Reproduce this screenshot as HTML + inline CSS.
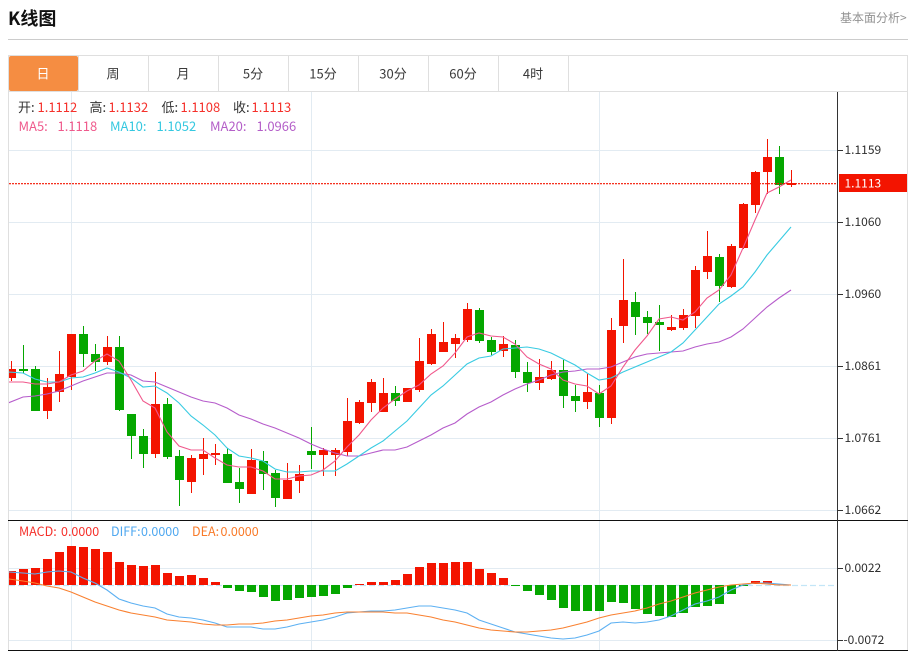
<!DOCTYPE html>
<html><head><meta charset="utf-8"><title>K线图</title>
<style>
html,body{margin:0;padding:0;background:#fff;width:915px;height:651px;overflow:hidden}
svg{display:block;font-family:"Noto Sans CJK SC","Liberation Sans",sans-serif}
</style></head><body>
<svg width="915" height="651" viewBox="0 0 915 651" xmlns="http://www.w3.org/2000/svg">
<defs><clipPath id="c"><rect x="9" y="92" width="828" height="558"/></clipPath></defs>
<text x="8" y="25" font-size="18" font-weight="700" fill="#111">K线图</text>
<text x="840" y="22" font-size="12" fill="#929292">基本面分析&gt;</text>
<rect x="8" y="39" width="900" height="1" fill="#ccc"/>
<g fill="#dfdfdf">
<rect x="8" y="55" width="900" height="1"/><rect x="8" y="91" width="900" height="1"/>
<rect x="8" y="55" width="1" height="596"/><rect x="907" y="55" width="1" height="596"/>
<rect x="78" y="56" width="1" height="35"/><rect x="148" y="56" width="1" height="35"/><rect x="218" y="56" width="1" height="35"/><rect x="288" y="56" width="1" height="35"/><rect x="358" y="56" width="1" height="35"/><rect x="428" y="56" width="1" height="35"/><rect x="498" y="56" width="1" height="35"/><rect x="568" y="56" width="1" height="35"/>
</g>
<rect x="9" y="56" width="69" height="35" rx="2" fill="#f58d42"/>
<g font-size="13" fill="#3a3a3a" text-anchor="middle">
<text x="43" y="78.5" fill="#fff">日</text><text x="113" y="78.5">周</text><text x="183" y="78.5">月</text><text x="253" y="78.5">5分</text><text x="323" y="78.5">15分</text><text x="393" y="78.5">30分</text><text x="463" y="78.5">60分</text><text x="533" y="78.5">4时</text>
</g>
<g fill="#e2ebf2">
<rect x="9" y="150" width="828" height="1"/><rect x="9" y="222" width="828" height="1"/><rect x="9" y="294" width="828" height="1"/><rect x="9" y="366" width="828" height="1"/><rect x="9" y="438" width="828" height="1"/><rect x="9" y="510" width="828" height="1"/><rect x="9" y="568" width="828" height="1"/><rect x="9" y="640" width="828" height="1"/>
<rect x="71" y="92" width="1" height="558"/><rect x="311" y="92" width="1" height="558"/><rect x="599" y="92" width="1" height="558"/>
</g>
<g clip-path="url(#c)" fill="none">
<path stroke="#f31400" stroke-width="1" d="M11.5 361V381M47.5 378V419M59.5 351V402M71.5 334V390M107.5 336V365M155.5 372V458M191.5 455V493M203.5 438V475M215.5 444V465M251.5 449V494M287.5 463V499M299.5 465V493M323.5 448V476M335.5 448V476M347.5 398V456M359.5 400V424M371.5 379V412M383.5 378V412M407.5 388V402M419.5 338V392M431.5 329V365M443.5 322V352M455.5 334V358M467.5 303V342M503.5 336V357M539.5 359V390M551.5 361V380M587.5 374V409M611.5 318V424M623.5 259V343M671.5 315V331M683.5 309V330M695.5 266V328M707.5 231V279M731.5 244V288M743.5 203V249M755.5 171V213M767.5 139V194M791.5 170V187"/>
<path stroke="#f31400" stroke-width="9" d="M11.5 369V378M47.5 387V411M59.5 374V392M71.5 334V377M107.5 347V362M155.5 404V454M191.5 458V482M203.5 454V459M215.5 453V455M251.5 460V494M287.5 480V499M299.5 474V481M323.5 450V455M335.5 450V455M347.5 421V452M359.5 402V423M371.5 382V403M383.5 393V412M407.5 388V402M419.5 361V390M431.5 334V364M443.5 342V352M455.5 338V344M467.5 309V340M503.5 344V351M539.5 377V383M551.5 370V379M587.5 392V402M611.5 330V418M623.5 300V326M671.5 327V330M683.5 315V328M695.5 270V316M707.5 256V272M731.5 246V287M743.5 204V248M755.5 172V205M767.5 157V172M791.5 183V185"/>
<path stroke="#05a700" stroke-width="1" d="M23.5 345V373M35.5 366V411M83.5 326V367M95.5 344V371M119.5 336V411M131.5 414V459M143.5 429V468M167.5 398V459M179.5 450V506M227.5 448V483M239.5 468V503M263.5 451V490M275.5 470V507M311.5 427V469M395.5 386V406M479.5 308V343M491.5 337V355M515.5 340V378M527.5 362V392M563.5 360V408M575.5 385V412M599.5 385V427M635.5 292V335M647.5 311V334M659.5 305V351M719.5 254V302M779.5 146V194"/>
<path stroke="#05a700" stroke-width="9" d="M23.5 369V371M35.5 369V411M83.5 334V354M95.5 354V362M119.5 347V410M131.5 414V436M143.5 436V454M167.5 404V457M179.5 456V480M227.5 454V483M239.5 482V489M263.5 461V474M275.5 473V498M311.5 451V455M395.5 393V401M479.5 310V341M491.5 340V352M515.5 345V372M527.5 372V383M563.5 370V396M575.5 396V401M599.5 393V418M635.5 302V317M647.5 317V323M659.5 322V325M719.5 257V286M779.5 157V185"/>
<path stroke="#b65ccb" stroke-width="1.1" d="M8 403L23 397 35 396 47 394 59 391 71 386 83 381 95 377 107 373 119 373 131 375 143 381 155 382 167 387 179 392 191 397 203 401 215 403 227 408 239 415 251 419 263 424 275 428 287 433 299 438 311 444 323 449 335 453 347 456 359 456 371 453 383 450 395 450 407 447 419 441 431 435 443 428 455 423 467 414 479 407 491 402 503 395 515 389 527 384 539 380 551 375 563 372 575 371 587 369 599 369 611 367 623 362 635 357 647 354 659 353 671 352 683 351 695 347 707 344 719 342 731 337 743 329 755 318 767 307 779 298 791 290"/>
<path stroke="#38cbe2" stroke-width="1.1" d="M8 372L23 373 35 379 47 382 59 382 71 378 83 377 95 373 107 368 119 372 131 378 143 387 155 386 167 393 179 403 191 416 203 425 215 435 227 448 239 456 251 458 263 461 275 469 287 472 299 472 311 471 323 471 335 471 347 464 359 456 371 448 383 441 395 431 407 421 419 408 431 395 443 386 455 375 467 364 479 358 491 356 503 349 515 348 527 347 539 349 551 353 563 359 575 365 587 373 599 380 611 378 623 372 635 367 647 362 659 357 671 352 683 343 695 330 707 317 719 304 731 296 743 287 755 272 767 255 779 241 791 227"/>
<path stroke="#f0588c" stroke-width="1.1" d="M8 382L23 382 35 384 47 384 59 382 71 375 83 371 95 361 107 354 119 361 131 380 143 401 155 408 167 432 179 446 191 450 203 450 215 458 227 465 239 467 251 467 263 471 275 479 287 479 299 476 311 475 323 470 335 461 347 447 359 435 371 420 383 408 395 399 407 391 419 385 431 374 443 366 455 353 467 337 479 333 491 336 503 337 515 344 527 357 539 364 551 369 563 380 575 384 587 386 599 394 611 386 623 367 635 350 647 336 659 319 671 317 683 320 695 312 707 298 719 290 731 275 743 248 755 220 767 193 779 187 791 180"/>
<path stroke="#c3e6f7" stroke-width="1.2" stroke-dasharray="6 3" d="M9 585.5H834"/>
<path stroke="#f31400" stroke-width="9" d="M11.5 571V585M23.5 569V585M35.5 568V585M47.5 559V585M59.5 552V585M71.5 546V585M83.5 547V585M95.5 549V585M107.5 552V585M119.5 562V585M131.5 565V585M143.5 566V585M155.5 565V585M167.5 573V585M179.5 576V585M191.5 575V585M203.5 578V585M215.5 582V585M359.5 584V585M371.5 582V585M383.5 582V585M395.5 580V585M407.5 574V585M419.5 567V585M431.5 563V585M443.5 563V585M455.5 562V585M467.5 562V585M479.5 569V585M491.5 573V585M503.5 578V585M755.5 581V584M767.5 581V584"/>
<path stroke="#05a700" stroke-width="9" d="M227.5 585V588M239.5 585V591M251.5 585V592M263.5 585V597M275.5 585V601M287.5 585V600M299.5 585V598M311.5 585V597M323.5 585V596M335.5 585V594M347.5 585V588M515.5 585V586M527.5 585V591M539.5 585V595M551.5 585V600M563.5 585V608M575.5 585V611M587.5 585V611M599.5 585V611M611.5 585V602M623.5 585V603M635.5 585V609M647.5 585V614M659.5 585V616M671.5 585V617M683.5 585V613M695.5 585V607M707.5 585V606M719.5 585V604M731.5 585V594M743.5 585V586"/>
<path stroke="#5cb0f2" stroke-width="1.1" d="M9 572L23 573 35 574 47 572 59 571 71 572 83 578 95 583 107 590 119 599 131 603 143 606 155 608 167 614 179 617 191 618 203 620 215 623 227 627 239 627 251 627 263 629 275 629 287 627 299 624 311 622 323 620 335 617 347 613 359 612 371 611 383 611 395 610 407 608 419 606 431 606 443 608 455 610 467 613 479 620 491 624 503 628 515 632 527 634 539 636 551 638 563 639 575 638 587 635 599 631 611 623 623 622 635 623 647 622 659 620 671 616 683 610 695 604 707 601 719 597 731 590 743 585 755 583 767 583 779 584 791 585"/>
<path stroke="#f98030" stroke-width="1.1" d="M9 579L23 581 35 583 47 586 59 588 71 592 83 597 95 602 107 606 119 610 131 613 143 615 155 617 167 620 179 621 191 622 203 624 215 625 227 625 239 624 251 624 263 623 275 621 287 620 299 618 311 616 323 615 335 613 347 612 359 612 371 612 383 612 395 613 407 613 419 615 431 617 443 620 455 622 467 625 479 628 491 630 503 631 515 632 527 632 539 631 551 630 563 628 575 625 587 622 599 618 611 615 623 613 635 611 647 608 659 604 671 601 683 597 695 593 707 590 719 587 731 585 743 584 755 583 767 584 779 585 791 585"/>
<path stroke="#f31400" stroke-width="1.2" stroke-dasharray="2 1" d="M9 183.7H837"/>
</g>
<rect x="8" y="520" width="900" height="1" fill="#111"/>
<rect x="8" y="650" width="900" height="1" fill="#111"/>
<rect x="837" y="92" width="1" height="559" fill="#333"/>
<g fill="#333">
<rect x="838" y="150" width="5" height="1"/><rect x="838" y="222" width="5" height="1"/><rect x="838" y="294" width="5" height="1"/><rect x="838" y="366" width="5" height="1"/><rect x="838" y="438" width="5" height="1"/><rect x="838" y="510" width="5" height="1"/><rect x="838" y="568" width="5" height="1"/><rect x="838" y="640" width="5" height="1"/>
</g>
<rect x="839" y="174" width="68" height="18" fill="#f31400"/>
<g font-size="12" fill="#2e2e2e">
<text x="844.5" y="154">1.1159</text><text x="844.5" y="226">1.1060</text><text x="844.5" y="298">1.0960</text><text x="844.5" y="370">1.0861</text><text x="844.5" y="442">1.0761</text><text x="844.5" y="514">1.0662</text><text x="844.5" y="572">0.0022</text><text x="843.5" y="644">-0.0072</text>
<text x="844.5" y="187.5" fill="#fff">1.1113</text>
</g>
<g font-size="13">
<text y="112" fill="#333"><tspan x="18">开:</tspan><tspan x="89.5">高:</tspan><tspan x="161.5">低:</tspan><tspan x="233">收:</tspan></text>
<text y="112" fill="#f5302a"><tspan x="37.5">1.1112</tspan><tspan x="108.5">1.1132</tspan><tspan x="180.5">1.1108</tspan><tspan x="251.5">1.1113</tspan></text>
<text x="18.5" y="131" fill="#ef5a8c">MA5: <tspan x="57.5">1.1118</tspan></text>
<text x="110" y="131" fill="#35c8e0">MA10: <tspan x="156.5">1.1052</tspan></text>
<text x="210" y="131" fill="#b45ec8">MA20: <tspan x="256.5">1.0966</tspan></text>
</g>
<g font-size="12.5">
<text x="19" y="536" fill="#f5302a">MACD: <tspan x="61">0.0000</tspan></text>
<text x="111" y="536" fill="#4fa8f0">DIFF: <tspan x="141">0.0000</tspan></text>
<text x="192" y="536" fill="#f97a28">DEA: <tspan x="220.5">0.0000</tspan></text>
</g>
</svg>
</body></html>
